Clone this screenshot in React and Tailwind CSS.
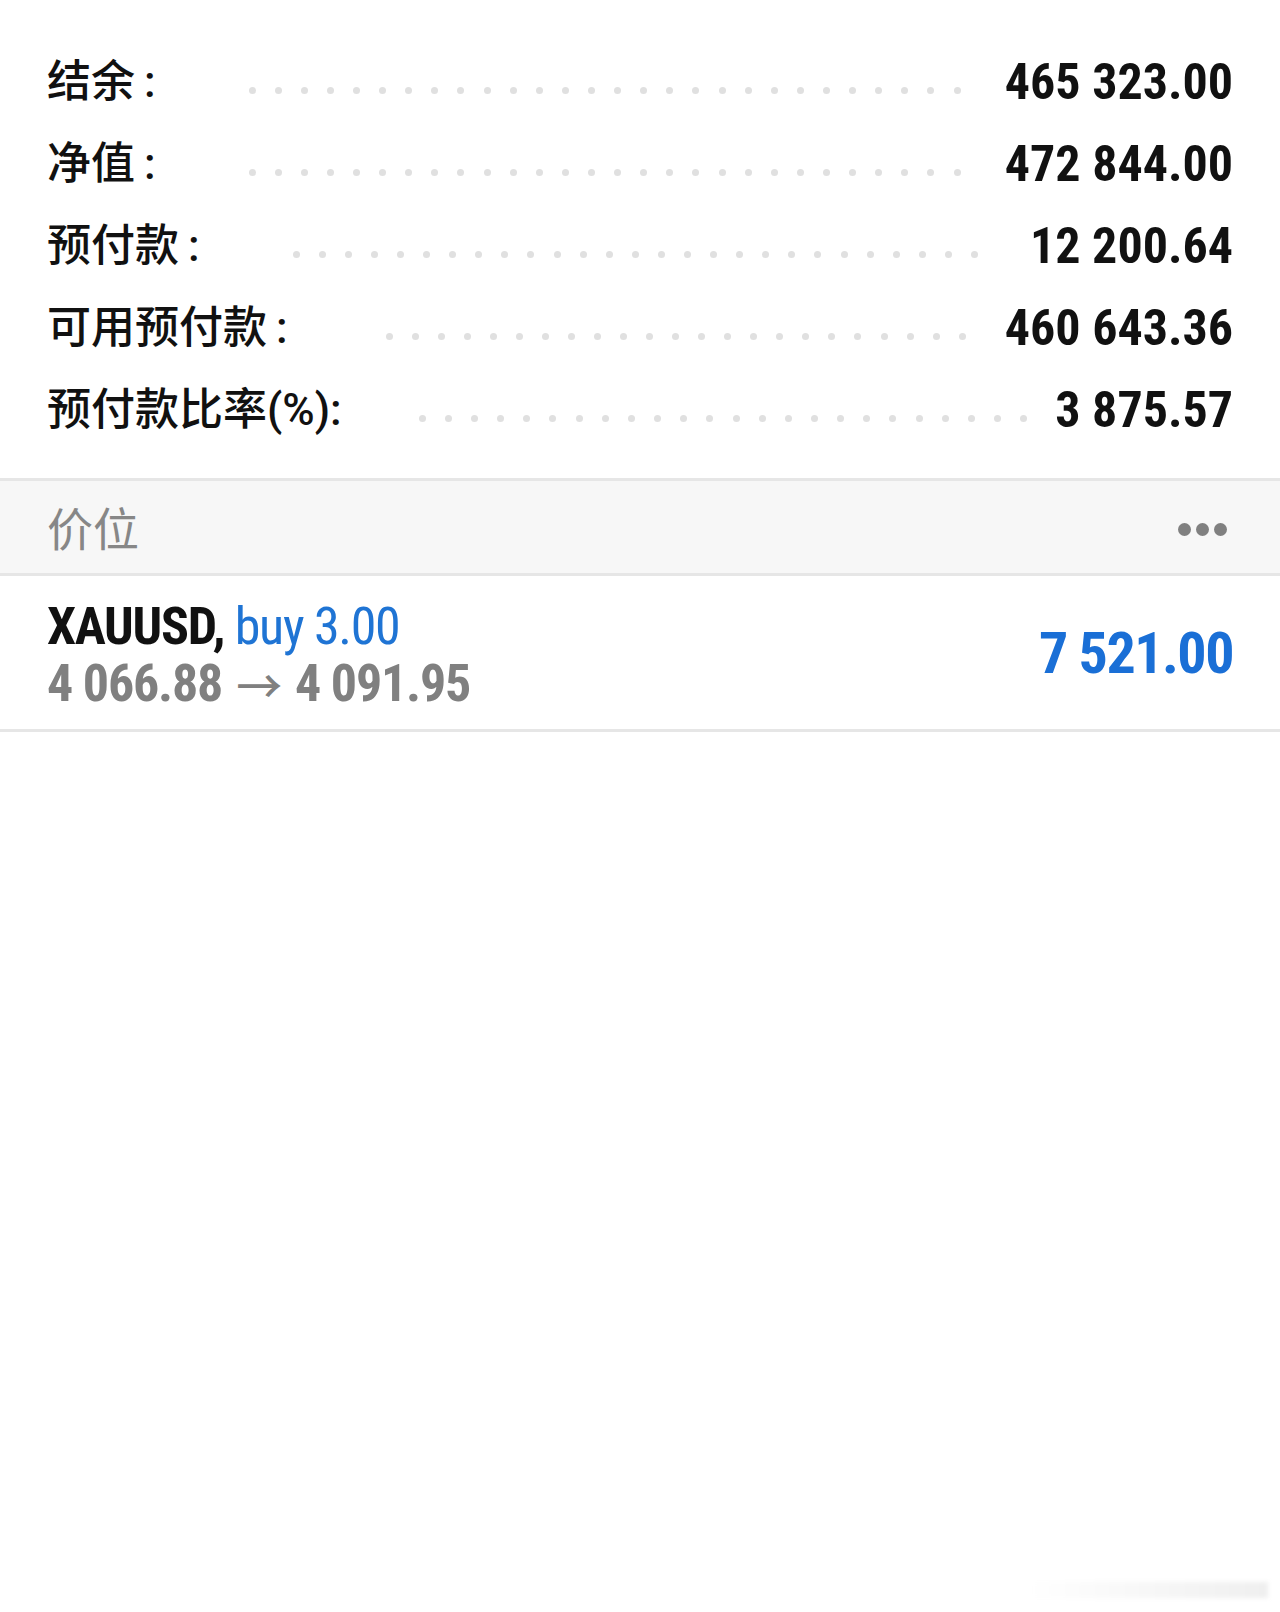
import React from 'react';

const NUM = { fontFamily: '"Roboto Condensed", Roboto, sans-serif' };
const CJK = { fontFamily: 'Roboto, "Noto Sans CJK SC", sans-serif' };
const ARROW = { fontFamily: '"Noto Sans CJK SC", sans-serif' };

const rows = [
  { label: '结余', colon: 'ml-[9px]', value: '465 323.00', dots: 28, gap: 'ml-[93px] mr-[44px]' },
  { label: '净值', colon: 'ml-[9px]', value: '472 844.00', dots: 28, gap: 'ml-[93px] mr-[44px]' },
  { label: '预付款', colon: 'ml-[9px]', value: '12 200.64', dots: 27, gap: 'ml-[93px] mr-[52px]' },
  { label: '可用预付款', colon: 'ml-[9px]', value: '460 643.36', dots: 23, gap: 'ml-[98px] mr-[39px]' },
  { label: '预付款比率(%)', colon: 'ml-0', value: '3 875.57', dots: 24, gap: 'ml-[77px] mr-[28px]' },
];

const Dots = ({ count, gap }) => (
  <div className={`flex-1 flex justify-between items-center mt-[16px] ${gap}`}>
    {Array.from({ length: count }).map((_, i) => (
      <span key={i} className="w-[7px] h-[7px] rounded-full bg-[#e0e0e0]" />
    ))}
  </div>
);

export default function App() {
  return (
    <div className="w-[1280px] min-h-[1612px] bg-white flex flex-col">
      {/* Account summary */}
      <div className="px-[47px] pt-[41px] pb-[27px]">
        {rows.map((r) => (
          <div key={r.label} className="h-[82px] flex items-center">
            <span className="text-[44px] font-medium text-[#111] leading-none" style={CJK}>
              {r.label}
              <span className={r.colon}>:</span>
            </span>
            <Dots count={r.dots} gap={r.gap} />
            <span className="text-[50px] font-bold text-[#111] leading-none" style={NUM}>{r.value}</span>
          </div>
        ))}
      </div>

      {/* Section header */}
      <div className="border-y-[3px] border-[#e6e6e6] bg-[#f7f7f7] h-[98px] pl-[47px] pr-[53px] flex items-center justify-between">
        <span className="text-[46px] text-[#878787] leading-none mt-[6px]" style={CJK}>价位</span>
        <div className="flex gap-[5px] mt-[4px]">
          <span className="w-[13px] h-[13px] rounded-full bg-[#808080]" />
          <span className="w-[13px] h-[13px] rounded-full bg-[#808080]" />
          <span className="w-[13px] h-[13px] rounded-full bg-[#808080]" />
        </div>
      </div>

      {/* Position */}
      <div className="h-[156px] border-b-[3px] border-[#e6e6e6] px-[47px] flex items-center justify-between">
        <div className="flex flex-col mt-[4px]" style={NUM}>
          <div className="text-[52px] leading-[57px] tracking-[-1.3px]">
            <span className="font-bold text-[#111]">XAUUSD,</span>{' '}
            <span className="text-[#1f74d4]">buy 3.00</span>
          </div>
          <div className="h-[57px] text-[52px] leading-[57px] font-bold text-[#808080] tracking-[-1.2px] flex items-center">
            <span>4 066.88</span>
            <span className="mx-[14px] text-[46px] leading-none font-medium" style={ARROW}>→</span>
            <span>4 091.95</span>
          </div>
        </div>
        <span className="text-[58px] font-bold text-[#1a6fd6] leading-none tracking-[-1.5px]" style={NUM}>7 521.00</span>
      </div>

      {/* faint mark at the bottom */}
      <div className="mt-auto self-end mr-[12px] mb-[14px] w-[240px] h-[16px] bg-gradient-to-r from-white to-[#efefef] blur-[2px]" />
    </div>
  );
}
